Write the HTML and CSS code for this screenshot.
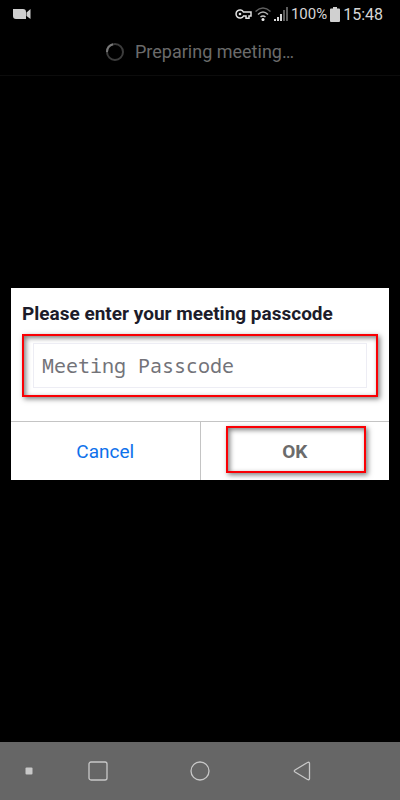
FILE: index.html
```html
<!DOCTYPE html>
<html lang="en">
<head>
  <meta charset="UTF-8" />
  <meta name="viewport" content="width=device-width, initial-scale=1.0" />
  <title>Preparing meeting</title>
  <link rel="stylesheet" href="styles.css">
</head>
<body>
  <header>
    <div class="status-bar">
      <svg class="camera" width="18" height="12" viewBox="0 0 18 12" fill="#cfcfcf">
        <path d="M0 1h10q3 0 3 3v7H3q-3 0-3-3zM13.5 4.500 17.500 1v10l-4-3z" />
      </svg>
      <div class="status-icons">
        <svg width="17" height="12" viewBox="0 0 17 12" fill="none" stroke="#e0e0e0" stroke-width="1.500">
          <path d="M8.500 4A4 4 0 1 0 8.500 8H11v2.200h3V8h2V4z" />
          <circle cx="5" cy="6" r="1.300" fill="#e0e0e0" stroke="none" />
        </svg>
        <svg width="16" height="16" viewBox="0 0 16 16" fill="none" stroke-width="1.500">
          <path d="M.5 5.500Q8-1.500 15.500 5.500" stroke="#606060" />
          <path d="M3 8.500Q8 3.500 13 8.500" stroke="#b0b0b0" />
          <path d="M5.500 11Q8 9 10.500 11" stroke="#c8c8c8" />
          <circle cx="8" cy="13.500" r="1.500" fill="#eee" />
        </svg>
        <svg width="14" height="14" viewBox="0 0 14 14">
          <path d="M0 12h2v2H0zM3 10h2v4H3zM6 7h2v7H6z" fill="#d8d8d8" />
          <path d="M9 3h2v11H9zM12 0h2v14h-2z" fill="#5c5c5c" />
        </svg>
        <span class="battery-level">100%</span>
        <svg class="battery" width="10" height="15" viewBox="0 0 10 15" fill="#d0d0d0">
          <path d="M3 0h4v1.500h2q1 0 1 1V14q0 1-1 1H1q-1 0-1-1V2.500q0-1 1-1h2z" />
        </svg>
        <span class="clock">15:48</span>
      </div>
    </div>
    <div class="title-bar">
      <svg width="18" height="18" viewBox="0 0 18 18" fill="none" stroke-width="2">
        <circle cx="9" cy="9" r="8" stroke="#3c3c3c" />
        <path d="M1 9A8 8 0 0 1 7 1.300" stroke="#777" />
      </svg>
      <span>Preparing meeting…</span>
    </div>
  </header>

  <main>
    <form class="dialog">
      <div class="dialog-body">
        <label for="passcode">Please enter your meeting passcode</label>
        <div class="field highlight">
          <input type="text" id="passcode" placeholder="Meeting Passcode" />
        </div>
      </div>
      <div class="dialog-buttons">
        <button type="button" class="cancel">Cancel</button>
        <button type="submit" class="ok">OK</button>
      </div>
    </form>
  </main>

  <nav class="nav-bar">
    <button type="button" class="nav-dot" aria-label="Hide bar">
      <svg width="8" height="8" viewBox="0 0 8 8"><rect x=".5" y=".5" width="7" height="7" rx="1" fill="#c8c8c8" /></svg>
    </button>
    <button type="button" aria-label="Recent apps">
      <svg width="20" height="20" viewBox="0 0 20 20"><rect x="1" y="1" width="18" height="18" rx="2" /></svg>
    </button>
    <button type="button" aria-label="Home">
      <svg width="20" height="20" viewBox="0 0 20 20"><circle cx="10" cy="10" r="9" /></svg>
    </button>
    <button type="button" aria-label="Back">
      <svg width="20" height="20" viewBox="0 0 20 20"><path d="M3 9Q1.500 10 3 11L15.500 18.500Q17.500 19.300 17.500 17.500V2.500Q17.500.7 15.500 1.500z" /></svg>
    </button>
  </nav>
</body>
</html>
```
FILE: styles.css
```css
* {
  box-sizing: border-box;
}

body {
  display: flex;
  flex-direction: column;
  min-height: 100vh;
  margin: 0;
  background-color: #000000;
  font-family: Roboto, sans-serif;
}

button {
  padding: 0;
  border: none;
  background: none;
  font-family: inherit;
}

.status-bar {
  display: flex;
  align-items: center;
  justify-content: space-between;
  height: 28px;
  padding: 0 17px 0 13px;
  color: #d6d6d6;
}

.status-icons {
  display: flex;
  align-items: center;
  gap: 3px;
}

.battery-level {
  font-size: 15px;
}

.clock {
  font-size: 16px;
}

.title-bar {
  display: flex;
  align-items: center;
  justify-content: center;
  gap: 11px;
  height: 48px;
  border-bottom: 1px solid #0c0c0c;
  color: #6b6b6b;
  font-size: 18px;
}

main {
  flex: 1;
  display: flex;
  align-items: center;
  padding: 0 11px 50px;
}

.dialog {
  flex: 1;
  background-color: #ffffff;
}

.dialog-body {
  padding: 14px 11px 24px;
}

.dialog-body label {
  display: block;
  margin-bottom: 8px;
  color: #1c1c2a;
  font-size: 19px;
  font-weight: bold;
  line-height: 24px;
}

.highlight,
.ok::after {
  border: 2px solid #fa0004;
  box-shadow: 2px 2px 5px rgba(0, 0, 0, 0.5), inset 2px 2px 5px rgba(0, 0, 0, 0.5);
}

.field {
  padding: 7px 9px;
}

.field input {
  display: block;
  width: 100%;
  height: 45px;
  padding: 0 8px;
  border: 1px solid #ededf4;
  background-color: #ffffff;
  color: #1c1c2a;
  font-family: "Droid Sans Mono", "Noto Sans Mono", "DejaVu Sans Mono", monospace;
  font-size: 20px;
}

.field input::placeholder {
  color: #737379;
}

.dialog-buttons {
  display: flex;
  border-top: 1px solid #c4c4c4;
}

.dialog-buttons button {
  flex: 1;
  height: 58px;
  font-size: 19px;
}

.cancel {
  color: #0e71eb;
}

.dialog-buttons .ok {
  position: relative;
  border-left: 1px solid #c4c4c4;
  color: #6b6b6b;
  font-weight: bold;
}

/* frame drawn over the button */
.ok::after {
  content: "";
  position: absolute;
  inset: 4px 23px 7px 25px;
}

.nav-bar {
  display: flex;
  align-items: center;
  justify-content: center;
  gap: 82px;
  height: 58px;
  background-color: #666666;
}

.nav-bar svg {
  display: block;
  fill: none;
  stroke: #c8c8c8;
  stroke-width: 1.3;
}

.nav-bar .nav-dot {
  margin-right: -27px;
  margin-left: -63px;
}

.nav-bar .nav-dot svg {
  stroke: none;
}
```
